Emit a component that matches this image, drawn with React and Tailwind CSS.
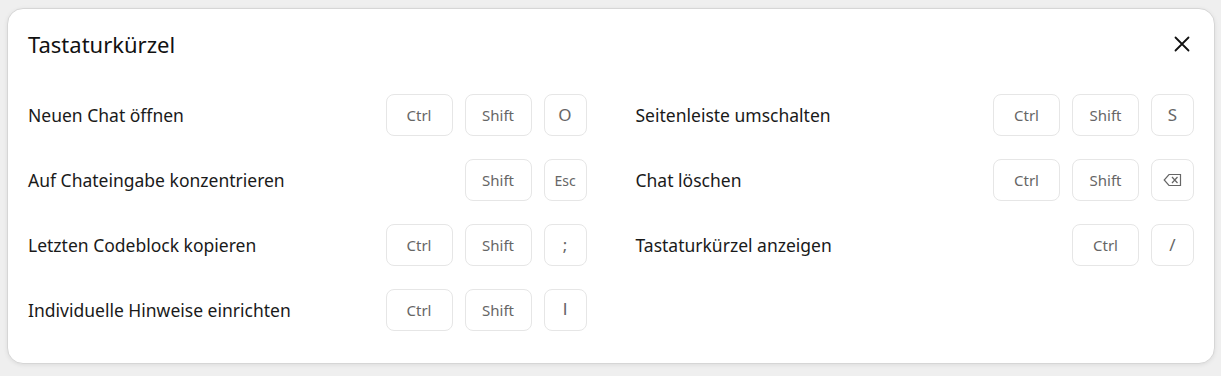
const shortcuts = [
  [
    { label: "Neuen Chat öffnen", keys: ["Ctrl", "Shift", "O"] },
    { label: "Auf Chateingabe konzentrieren", keys: ["Shift", "Esc"] },
    { label: "Letzten Codeblock kopieren", keys: ["Ctrl", "Shift", ";"] },
    { label: "Individuelle Hinweise einrichten", keys: ["Ctrl", "Shift", "I"] },
  ],
  [
    { label: "Seitenleiste umschalten", keys: ["Ctrl", "Shift", "S"] },
    { label: "Chat löschen", keys: ["Ctrl", "Shift", "backspace"] },
    { label: "Tastaturkürzel anzeigen", keys: ["Ctrl", "/"] },
  ],
];

const Backspace = () => (
  <svg width="19" height="14" viewBox="0 0 19 14" fill="none" stroke="currentColor" strokeWidth="1.2">
    <path d="M6 1.5 H17.5 V12.5 H6 L1.2 7 Z" strokeLinejoin="miter" />
    <path d="M9 4 L14.5 10 M14.5 4 L9 10" />
  </svg>
);

const Key = ({ k }) => {
  const wide = k === "Ctrl" || k === "Shift";
  let content = k;
  if (k === "backspace") content = <Backspace />;
  else if (k === "Esc") content = <span className="text-[14px]">Esc</span>;
  else if (k === "I") content = <span className="font-['Liberation_Sans'] text-[17px]">I</span>;
  else if (!wide) content = <span className="text-[17px]">{k}</span>;
  return (
    <kbd
      className={`flex h-[42px] items-center justify-center rounded-lg border border-[#e6e6e6] bg-white text-[15px] font-normal text-[#666666] ${wide ? "w-[67px]" : "w-[43px]"}`}
      style={{ fontFamily: "inherit" }}
    >
      {content}
    </kbd>
  );
};

const Row = ({ item }) => (
  <div className="flex h-[42px] items-center justify-between">
    <span className="text-[17.5px] text-[#1a1a1a]">{item.label}</span>
    <div className="flex gap-[12px]">
      {item.keys.map((k) => (
        <Key key={k} k={k} />
      ))}
    </div>
  </div>
);

export default function App() {
  return (
    <div
      className="h-[376px] w-[1221px] overflow-hidden bg-[#efefef] pl-[7px] pr-[6px] pt-[8px]"
      style={{ fontFamily: '"Noto Sans", "DejaVu Sans", sans-serif' }}
    >
      <div className="h-[356px] rounded-2xl border border-[#d6d6d6] bg-white shadow-[0_1px_4px_rgba(0,0,0,0.08)]">
        <div className="flex items-center justify-between pl-[20px] pr-[20px] pt-[19px]">
          <h2 className="text-[22px] leading-8 text-[#111111]">Tastaturkürzel</h2>
          <button className="flex h-6 w-6 items-center justify-center text-[#111111]">
            <svg width="16" height="16" viewBox="0 0 16 16" fill="none" stroke="currentColor" strokeWidth="1.8" strokeLinecap="round">
              <path d="M1.5 1.5 L14.5 14.5 M14.5 1.5 L1.5 14.5" />
            </svg>
          </button>
        </div>
        <div className="mt-[34px] grid grid-cols-2 gap-x-[49px] px-[20px]">
          {shortcuts.map((col, i) => (
            <div key={i} className="flex flex-col gap-[23px]">
              {col.map((item) => (
                <Row key={item.label} item={item} />
              ))}
            </div>
          ))}
        </div>
      </div>
    </div>
  );
}
